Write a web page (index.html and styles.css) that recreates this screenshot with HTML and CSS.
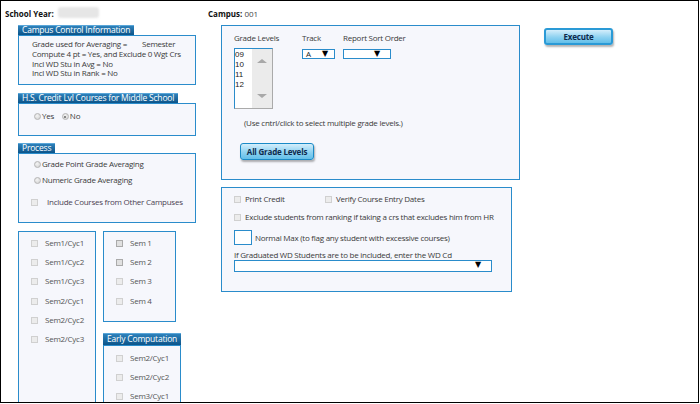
FILE: index.html
```html
<!DOCTYPE html>
<html lang="en">
<head>
    <meta charset="UTF-8">
    <title>Class Rank Options</title>
    <link rel="stylesheet" href="styles.css">
</head>
<body>
<div class="page">

    <!-- Header -->
    <div class="header">
        <div class="school-year"><b>School Year:</b> <span class="blur"></span></div>
        <div class="campus"><b>Campus:</b> 001</div>
    </div>

    <div class="main">

        <!-- Left column -->
        <div class="left-col">
            <div class="tab">Campus Control Information</div>
            <div class="box control-box">
                <p><span class="avg-label">Grade used for Averaging =</span>Semester</p>
                <p>Compute 4 pt = Yes, and Exclude 0 Wgt Crs</p>
                <p>Incl WD Stu in Avg = No</p>
                <p>Incl WD Stu in Rank = No</p>
            </div>

            <div class="tab">H.S. Credit Lvl Courses for Middle School</div>
            <div class="box hs-box">
                <span class="radio"></span><span class="opt">Yes</span>
                <span class="radio checked"></span><span class="opt">No</span>
            </div>

            <div class="tab">Process</div>
            <div class="box process-box">
                <div class="row"><span class="radio"></span>Grade Point Grade Averaging</div>
                <div class="row"><span class="radio"></span>Numeric Grade Averaging</div>
                <div class="row include"><span class="check"></span>Include Courses from Other Campuses</div>
            </div>

            <div class="sem-area">
                <div class="box sem-box cyc-box">
                    <div class="sem-row"><span class="check"></span>Sem1/Cyc1</div>
                    <div class="sem-row"><span class="check"></span>Sem1/Cyc2</div>
                    <div class="sem-row"><span class="check"></span>Sem1/Cyc3</div>
                    <div class="sem-row"><span class="check"></span>Sem2/Cyc1</div>
                    <div class="sem-row"><span class="check"></span>Sem2/Cyc2</div>
                    <div class="sem-row"><span class="check"></span>Sem2/Cyc3</div>
                </div>
                <div class="sem-right">
                    <div class="box sem-box semester-box">
                        <div class="sem-row"><span class="check dark"></span>Sem 1</div>
                        <div class="sem-row"><span class="check dark"></span>Sem 2</div>
                        <div class="sem-row"><span class="check"></span>Sem 3</div>
                        <div class="sem-row"><span class="check"></span>Sem 4</div>
                    </div>
                    <div class="tab early-tab">Early Computation</div>
                    <div class="box sem-box early-box">
                        <div class="sem-row"><span class="check"></span>Sem2/Cyc1</div>
                        <div class="sem-row"><span class="check"></span>Sem2/Cyc2</div>
                        <div class="sem-row"><span class="check"></span>Sem3/Cyc1</div>
                    </div>
                </div>
            </div>
        </div>

        <!-- Middle column -->
        <div class="mid-col">
            <div class="box grade-box">
                <div class="fields">
                    <div class="field grade-field">
                        <div class="label">Grade Levels</div>
                        <div class="listbox">
                            <div class="items">
                                <div>09</div>
                                <div>10</div>
                                <div>11</div>
                                <div>12</div>
                            </div>
                            <div class="scroll">
                                <span class="arrow-up"></span>
                                <span class="arrow-down"></span>
                            </div>
                        </div>
                    </div>
                    <div class="field track-field">
                        <div class="label">Track</div>
                        <div class="select track-select">A<span class="caret">&#9660;</span></div>
                    </div>
                    <div class="field">
                        <div class="label">Report Sort Order</div>
                        <div class="select sort-select"><span class="caret">&#9660;</span></div>
                    </div>
                </div>
                <p class="hint">(Use cntrl/click to select multiple grade levels.)</p>
                <button class="btn all-btn">All Grade Levels</button>
            </div>

            <div class="box options-box">
                <div class="opt-row">
                    <span class="check"></span><span class="print">Print Credit</span><span class="check"></span>Verify Course Entry Dates
                </div>
                <div class="opt-row">
                    <span class="check"></span>Exclude students from ranking if taking a crs that excludes him from HR
                </div>
                <div class="opt-row max-row">
                    <span class="max-input"></span>Normal Max (to flag any student with excessive courses)
                </div>
                <div class="wd-label">If Graduated WD Students are to be included, enter the WD Cd</div>
                <div class="select wd-select"><span class="caret">&#9660;</span></div>
            </div>
        </div>

        <!-- Right column -->
        <div class="right-col">
            <button class="btn execute-btn">Execute</button>
        </div>

    </div>
</div>
</body>
</html>
```

FILE: styles.css
```css
*{
    margin: 0;
    padding: 0;
    box-sizing: border-box;
}

body{
    font-family: "Open Sans", "Liberation Sans", sans-serif;
    font-size: 8px;
    letter-spacing: -0.25px;
    color: #3a3a3a;
    background: #fff;
}

.page{
    width: 699px;
    height: 403px;
    border: 1px solid #000;
    overflow: hidden;
}

/* Header */

.header{
    display: flex;
    height: 24px;
    padding: 7px 0 0 4px;
    font-size: 8px;
    letter-spacing: 0;
    color: #444;
}

.school-year{
    width: 203px;
    display: flex;
    gap: 4px;
}

.school-year b, .campus b{
    color: #111;
}

.blur{
    display: inline-block;
    width: 41px;
    height: 11px;
    margin-top: -1px;
    background: #e6e6e6;
    border-radius: 3px;
    filter: blur(1px);
}

.main{
    display: flex;
}

/* Shared boxes */

.tab{
    width: fit-content;
    height: 10px;
    line-height: 10px;
    padding: 0 4px;
    background: linear-gradient(#3186c0, #0c5489);
    box-shadow: inset 0 1px 0 #5aa6d8;
    color: #fff;
    font-size: 8.5px;
    letter-spacing: -0.2px;
    white-space: nowrap;
}

.box{
    background: #f6f7fc;
    border: 1px solid #2a8ccb;
}

/* Left column */

.left-col{
    width: 220px;
    padding-left: 17px;
}

.left-col > .box{
    width: 178px;
}

.control-box{
    height: 50px;
    padding: 3px 0 0 13px;
    margin-bottom: 8px;
}

.control-box p{
    line-height: 9.8px;
}

.avg-label{
    display: inline-block;
    width: 110px;
}

.hs-box{
    height: 33px;
    padding: 6px 0 0 15px;
    margin-bottom: 7px;
}

.radio{
    display: inline-block;
    width: 7px;
    height: 7px;
    border-radius: 50%;
    border: 1px solid #b5b5b5;
    background: radial-gradient(circle at 40% 35%, #f4f4f4, #cfcfcf);
    vertical-align: -1px;
    position: relative;
}

.radio.checked::after{
    content: "";
    position: absolute;
    left: 1.5px;
    top: 1.5px;
    width: 2px;
    height: 2px;
    border-radius: 50%;
    background: #666;
}

.opt{
    margin: 0 6px 0 1px;
}

.process-box{
    height: 70px;
    padding: 4px 0 0 15px;
    margin-bottom: 8px;
}

.process-box .row{
    height: 16px;
}

.process-box .row .radio{
    margin-right: 1px;
}

.process-box .include{
    margin-top: 6px;
    color: #4b3f52;
}

.check{
    display: inline-block;
    width: 7px;
    height: 7px;
    border: 1px solid #d0d0d0;
    background: #ececec;
    vertical-align: -1px;
    margin-right: 7px;
}

.check.dark{
    border-color: #aaa;
    background: #e0e0e0;
}

.include .check{
    margin-left: -3px;
    margin-right: 9px;
}

.sem-area{
    display: flex;
    gap: 7px;
}

.sem-box{
    padding: 5px 0 0 12px;
    color: #555;
}

.cyc-box{
    width: 78px;
    height: 180px;
}

.semester-box{
    width: 73px;
    height: 91px;
}

.sem-row{
    height: 19.2px;
}

.early-tab{
    margin-top: 11px;
    height: 12px;
    line-height: 12px;
}

.early-box{
    width: 78px;
    height: 80px;
    padding-top: 6px;
}

/* Middle column */

.mid-col{
    width: 323px;
}

.grade-box{
    width: 299px;
    height: 155px;
    padding: 6px 0 0 12px;
    margin-bottom: 7px;
}

.fields{
    display: flex;
}

.label{
    height: 16px;
    line-height: 11px;
}

.grade-field{
    width: 68px;
}

.track-field{
    width: 41px;
}

.listbox{
    display: flex;
    width: 39px;
    height: 61px;
    background: #fff;
    border: 1px solid #2a8ccb;
    border-right-color: #aaa;
    border-bottom-color: #aaa;
    font-family: "Liberation Sans", sans-serif;
    font-size: 8px;
    letter-spacing: 0;
    color: #222;
}

.items{
    width: 17px;
    padding-top: 1px;
    line-height: 10px;
}

.scroll{
    flex: 1;
    background: #ebebeb;
    display: flex;
    flex-direction: column;
    align-items: center;
    justify-content: space-between;
    padding: 10px 0 10px;
}

.arrow-up{
    width: 0;
    height: 0;
    border-left: 5px solid transparent;
    border-right: 5px solid transparent;
    border-bottom: 4px solid #a8a8a8;
}

.arrow-down{
    width: 0;
    height: 0;
    border-left: 5px solid transparent;
    border-right: 5px solid transparent;
    border-top: 4px solid #a8a8a8;
}

.select{
    position: relative;
    height: 10px;
    line-height: 8px;
    background: #fff;
    border: 1px solid #2a8ccb;
    font-size: 8px;
    padding-left: 3px;
    color: #222;
}

.caret{
    position: absolute;
    top: 0;
    right: 10px;
    font-size: 8px;
    line-height: 8px;
    color: #000;
    font-family: "DejaVu Sans", sans-serif;
}

.track-select{
    width: 33px;
    margin-top: 1px;
}

.track-select .caret{
    right: 6px;
}

.sort-select{
    width: 48px;
    margin-top: 1px;
}

.hint{
    margin: 8px 0 0 10px;
    height: 26px;
}

.btn{
    font-family: "Open Sans", "Liberation Sans", sans-serif;
    font-weight: bold;
    letter-spacing: -0.2px;
    color: #0d2a4d;
    background: linear-gradient(#d4eefb, #8ed2f1 55%, #63bfe9);
    border: 1px solid #1a8ac6;
    border-radius: 3px;
    box-shadow: 1px 2px 2px rgba(0, 0, 0, 0.3);
    cursor: pointer;
}

.all-btn{
    width: 74px;
    height: 17px;
    font-size: 8px;
    margin-left: 6px;
}

.options-box{
    width: 291px;
    height: 105px;
    padding: 5px 0 0 12px;
}

.opt-row{
    height: 18px;
}

.print{
    display: inline-block;
    width: 80px;
}

.opt-row .check{
    margin-right: 4px;
}

.max-row{
    display: flex;
    align-items: center;
    height: 15px;
    margin-top: 1px;
    margin-bottom: 5px;
}

.max-input{
    width: 18px;
    height: 15px;
    background: #fff;
    border: 1px solid #2a8ccb;
    margin-right: 3px;
}

.wd-label{
    line-height: 10px;
}

.wd-select{
    width: 258px;
    height: 12px;
}

/* Right column */

.right-col{
    padding-top: 3px;
}

.execute-btn{
    width: 69px;
    height: 17px;
    font-size: 8px;
    border: 2px solid #2a9ad6;
}
```
